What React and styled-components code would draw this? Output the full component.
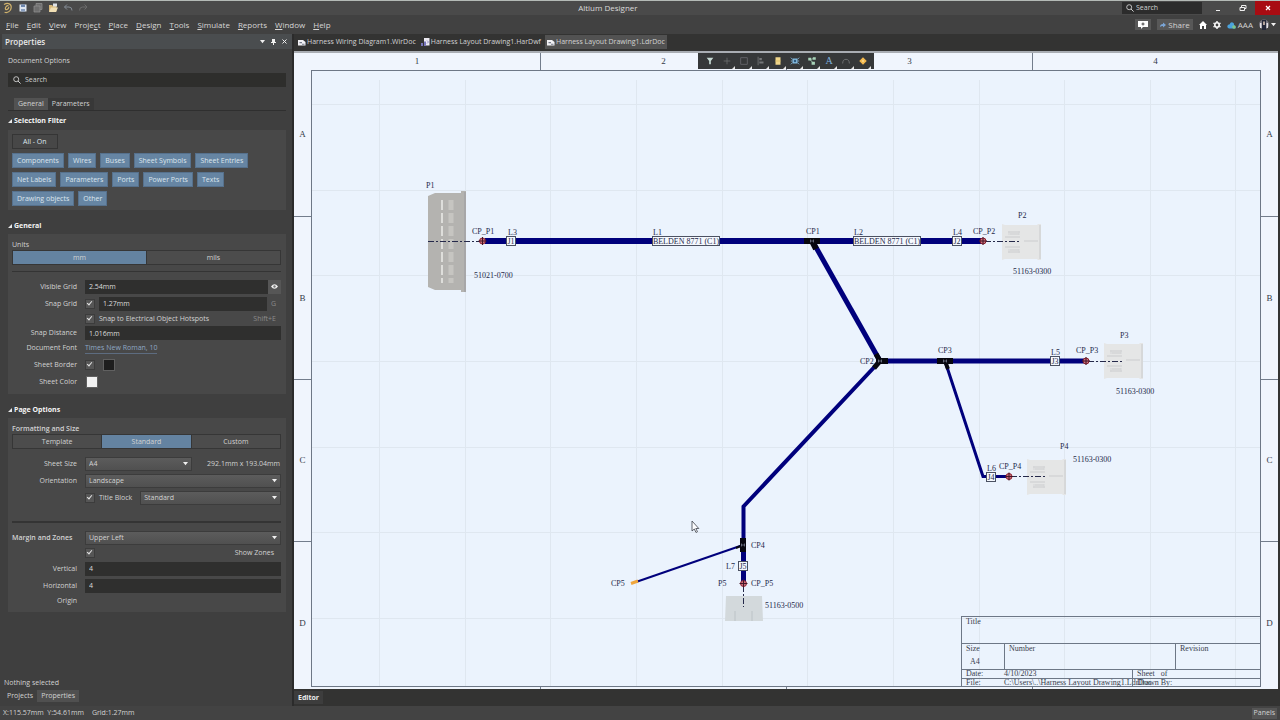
import React from "react";
import styled, { createGlobalStyle, css } from "styled-components";

const UI = '"Open Sans", "Noto Sans", sans-serif';
const SERIF = '"Liberation Serif", "Times New Roman", serif';

const GlobalStyle = createGlobalStyle`
  *, *::before, *::after { box-sizing: border-box; }
  html, body, #root { height: 100%; margin: 0; }
  body {
    background: #3a3a3a;
    color: #d2d2d2;
    font: 7px/10px ${UI};
    overflow: hidden;
  }
  button, input, select {
    margin: 0;
    padding: 0;
    border: 0;
    font: inherit;
    color: inherit;
    background: none;
  }
  svg { display: block; }
`;

/* ---------- shell ---------- */

const Shell = styled.div`
  display: flex;
  flex-direction: column;
  height: 100vh;
`;

const TitleBar = styled.header`
  display: grid;
  grid-template-columns: 9fr auto 10fr;
  height: 15px;
  align-items: center;
  background: #4a4a4a;
  border-top: 1px solid #b4bab6;
`;

const QuickAccess = styled.div`
  display: flex;
  gap: 3px;
  padding-left: 2px;
`;

const QuickButton = styled.button`
  display: grid;
  place-items: center;
  width: 12px;
  height: 14px;
`;

const AppTitle = styled.h1`
  margin: 0;
  font-size: 8px;
  line-height: 14px;
  font-weight: 400;
  color: #dadada;
`;

const WindowTools = styled.div`
  display: flex;
  justify-content: flex-end;
  align-items: center;
  height: 14px;
`;

const GlobalSearch = styled.label`
  display: flex;
  align-items: center;
  gap: 2px;
  width: 80px;
  height: 12px;
  padding-left: 4px;
  margin-right: 3px;
  background: #2c2c2c;
  input { flex: 1; min-width: 0; outline: none; }
  input::placeholder { color: #d0d0d0; opacity: 1; }
`;

const WindowButton = styled.button`
  display: grid;
  place-items: center;
  width: 25px;
  height: 14px;
  background: ${(p) => (p.$danger ? "#a80c12" : "transparent")};
`;

const MenuBar = styled.div`
  display: flex;
  justify-content: space-between;
  align-items: center;
  height: 19px;
  background: #414141;
`;

const Menus = styled.nav`
  display: flex;
  gap: 8px;
  padding-left: 6px;
`;

const MenuItem = styled.button`
  font-size: 8px;
  line-height: 14px;
  color: #d6d6d6;
`;

const Account = styled.div`
  display: flex;
  align-items: center;
  gap: 6px;
  padding-right: 4px;
  font-size: 8px;
`;

const AccountButton = styled.button`
  display: flex;
  align-items: center;
  justify-content: center;
  gap: 2px;
  height: 11px;
  padding: 0 ${(p) => (p.$filled ? "3px" : "0")};
  background: ${(p) => (p.$filled ? "#585858" : "transparent")};
`;

const Workspace = styled.div`
  display: grid;
  grid-template-columns: 294px minmax(0, 1fr);
  flex: 1;
  min-height: 0;
`;

/* ---------- properties panel ---------- */

const Panel = styled.aside`
  display: flex;
  flex-direction: column;
  min-height: 0;
  padding-left: 2px;
  background: #3f3f3f;
  border-right: 2px solid #2b2b2b;
  overflow: hidden;
`;

const PanelHeader = styled.div`
  display: flex;
  justify-content: space-between;
  align-items: center;
  height: 15px;
  flex: none;
  padding: 0 3px;
  background: #4a4d4f;
`;

const PanelTitle = styled.h2`
  margin: 0;
  font-size: 8px;
  line-height: 14px;
  font-weight: 600;
  color: #e8e8e8;
`;

const HeaderTools = styled.div`
  display: flex;
  gap: 2px;
`;

const HeaderButton = styled.button`
  display: grid;
  place-items: center;
  width: 9px;
  height: 12px;
`;

const PanelBody = styled.div`
  flex: 1;
  min-height: 0;
  padding: 6px 6px 0;
`;

const PanelCaption = styled.p`
  margin: 0 0 6px;
  line-height: 12px;
`;

const PanelSearch = styled.label`
  display: flex;
  align-items: center;
  gap: 4px;
  height: 14px;
  padding-left: 5px;
  background: #2e2e2c;
  input { flex: 1; min-width: 0; outline: none; }
  input::placeholder { color: #cfcfcf; opacity: 1; }
`;

const TabRow = styled.div`
  display: flex;
  height: 13px;
  margin-top: 11px;
  padding-left: 6px;
  border-bottom: 1px solid #2f2f2f;
`;

const PanelTab = styled.button`
  padding: 0 4px;
  line-height: 12px;
  background: ${(p) => (p.$active ? "#525252" : "#383838")};
`;

const SectionTitle = styled.h3`
  display: flex;
  align-items: center;
  gap: 2px;
  height: 12px;
  margin: ${(p) => (p.$first ? "4px 0 3px" : "10px 0 2px")};
  font-size: 7px;
  font-weight: 700;
  color: #f4f4f4;
`;

const SectionBox = styled.section`
  padding: 4px 5px 4px 4px;
  background: #484848;
`;

const Chips = styled.div`
  display: flex;
  flex-wrap: wrap;
  gap: 4px;
  margin-top: 4px;
`;

const Chip = styled.button`
  height: 15px;
  padding: 0 ${(p) => (p.$off ? "10px" : "4px")};
  line-height: 13px;
  color: #dde6ee;
  border: 1px solid ${(p) => (p.$off ? "#353535" : "#56718d")};
  background: ${(p) => (p.$off ? "#474747" : "#6685a3")};
`;

const GroupLabel = styled.div`
  height: 10px;
  margin-top: 2px;
  font-weight: ${(p) => (p.$strong ? 600 : 400)};
`;

const Segments = styled.div`
  display: flex;
  height: 15px;
  border: 1px solid #363636;
`;

const Segment = styled.button`
  flex: 1;
  line-height: 13px;
  background: ${(p) => (p.$active ? "#6483a1" : "#4c4c4c")};
  & + & { border-left: 1px solid #363636; }
`;

const Rule = styled.hr`
  width: 100%;
  height: ${(p) => (p.$thick ? "2px" : "1px")};
  margin: ${(p) => (p.$thick ? "15px 0 6px" : "6px 0")};
  border: 0;
  background: #343434;
`;

const rowHeights = { short: "14px", medium: "16px", tall: "17px" };

const Row = styled.div`
  display: grid;
  grid-template-columns: 65px minmax(0, 1fr);
  column-gap: 8px;
  align-items: center;
  height: ${(p) => rowHeights[p.$size || "tall"]};
`;

const RowLabel = styled.label`
  text-align: ${(p) => (p.$left ? "left" : "right")};
  font-weight: ${(p) => (p.$left ? 600 : 400)};
  white-space: nowrap;
`;

const RowControls = styled.div`
  display: flex;
  align-items: center;
  gap: ${(p) => (p.$joined ? "0" : "4px")};
  min-width: 0;
`;

const TextField = styled.input`
  flex: 1;
  min-width: 0;
  height: 14px;
  padding-left: 4px;
  background: #2f2f2e;
  color: #dcdcdc;
  outline: none;
`;

const Tick = styled.input`
  appearance: none;
  position: relative;
  flex: none;
  width: 10px;
  height: 10px;
  background: #565656;
  border: 1px solid #3c3c3c;
  &:checked::after {
    content: "";
    position: absolute;
    left: 2px;
    top: 0;
    width: 3px;
    height: 5px;
    border: solid #e4e4e4;
    border-width: 0 1px 1px 0;
    transform: rotate(40deg);
  }
`;

const Hint = styled.span`
  margin-left: auto;
  padding-right: 5px;
  color: #8b8b8b;
`;

const IconButton = styled.button`
  display: grid;
  place-items: center;
  width: 13px;
  height: 14px;
  background: #565656;
`;

const FontLink = styled.a`
  color: #8ea7c4;
  text-decoration: none;
  border-bottom: 1px solid #5d6c80;
`;

const Swatch = styled.button`
  width: 12px;
  height: 12px;
  margin-left: ${(p) => (p.$spaced ? "4px" : "1px")};
  border: 1px solid #606060;
  background: ${(p) => p.$color};
`;

const SelectWrap = styled.div`
  position: relative;
  flex: ${(p) => (p.$compact ? "0 0 107px" : "1")};
  min-width: 0;
  height: 14px;
  margin-left: ${(p) => (p.$spaced ? "4px" : "0")};
  background: linear-gradient(#5c5c5c, #505050);
  border: 1px solid #3c3c3c;
  select {
    appearance: none;
    display: block;
    width: 100%;
    height: 12px;
    padding-left: 3px;
    outline: none;
  }
  svg {
    position: absolute;
    right: 3px;
    top: 4px;
    pointer-events: none;
  }
`;

const PageRowsWrap = styled.div`
  padding-top: 6px;
`;

const Trailing = styled.label`
  margin-left: auto;
  padding-right: ${(p) => (p.$inset ? "7px" : "1px")};
  white-space: nowrap;
`;

const PanelStatus = styled.div`
  height: 12px;
  flex: none;
  padding-left: 2px;
  line-height: 12px;
`;

const DockTabs = styled.div`
  display: flex;
  align-items: center;
  height: 17px;
  flex: none;
  padding: 0 0 4px 1px;
`;

const DockTab = styled.button`
  height: 12px;
  padding: 0 4px;
  background: ${(p) => (p.$active ? "#505050" : "transparent")};
`;

/* ---------- document area ---------- */

const Documents = styled.main`
  display: flex;
  flex-direction: column;
  min-width: 0;
  min-height: 0;
  background: #333332;
`;

const DocTabs = styled.div`
  display: flex;
  height: 17px;
  flex: none;
  align-items: flex-end;
  padding: 0 0 2px 2px;
`;

const DocTab = styled.button`
  display: flex;
  align-items: center;
  gap: 1px;
  height: 14px;
  padding: 0 2px 0 1px;
  margin-right: 2px;
  background: ${(p) => (p.$active ? "#525252" : "transparent")};
`;

const Viewport = styled.div`
  position: relative;
  flex: 1;
  min-height: 0;
  margin-right: 2px;
  border-top: 2px solid #a9adb3;
  overflow: hidden;
`;

const Sheet = styled.div`
  display: grid;
  grid-template: 17px minmax(0, 1fr) 17px / 17px minmax(0, 1fr) 17px;
  height: calc(100% + 15px);
  background: #f0f5fd;
  color: #333a48;
  font: 9px/16px ${SERIF};
`;

const zoneBase = css`
  display: grid;
  justify-items: stretch;
  align-items: center;
  text-align: center;
`;

const HorizontalZones = styled.div`
  ${zoneBase}
  grid-area: ${(p) => (p.$bottom ? 3 : 1)} / 1 / auto / 4;
  grid-template-columns: repeat(4, 1fr);
  span + span { border-left: 1px solid #737d8c; }
  span { height: 17px; }
`;

const VerticalZones = styled.div`
  ${zoneBase}
  grid-area: 1 / ${(p) => (p.$right ? 3 : 1)} / 4 / auto;
  grid-template-rows: repeat(4, 1fr);
  align-items: stretch;
  span { display: grid; place-items: center; }
  span + span { border-top: 1px solid #737d8c; }
`;

const Frame = styled.div`
  position: relative;
  grid-area: 2 / 2;
  background: #ebf3fd;
  outline: 1px solid #6d7786;
  outline-offset: -1px;
`;

const Drawing = styled.svg`
  width: 100%;
  height: 100%;
  font: 8px ${SERIF};
`;

const ActiveBar = styled.div`
  position: absolute;
  inset: 0 0 auto 0;
  display: flex;
  justify-content: center;
  pointer-events: none;
`;

const ActiveTools = styled.div`
  display: flex;
  padding: 0 3px;
  background: #363839;
  pointer-events: auto;
`;

const ToolButton = styled.button`
  position: relative;
  display: grid;
  place-items: center;
  width: 17px;
  height: 16px;
  &::after {
    content: "";
    display: ${(p) => (p.$menu ? "block" : "none")};
    position: absolute;
    right: 0;
    bottom: 0;
    width: 3px;
    height: 3px;
    background: #e4e4e4;
    clip-path: polygon(100% 0, 100% 100%, 0 100%);
  }
`;

const TitleBlock = styled.div`
  position: absolute;
  right: 0;
  bottom: 0;
  display: grid;
  grid-template: 26px 26px 9px 8px / minmax(0, 1fr);
  width: 300px;
  font: 8px/9px ${SERIF};
  color: #3a414e;
  border: 1px solid #6d7786;
`;

const BlockRow = styled.div`
  display: grid;
  grid-template-columns: ${(p) => p.$columns};
  min-height: 0;
  & + & { border-top: 1px solid #6d7786; }
`;

const BlockCell = styled.div`
  padding-left: ${(p) => (p.$flush ? "0" : "4px")};
  white-space: pre;
  border-left: ${(p) => (p.$ruled ? "1px solid #6d7786" : "0")};
  line-height: ${(p) => (p.$tight ? "8px" : "9px")};
`;

const SizeValue = styled.div`
  padding: 4px 0 0 4px;
`;

const EditorTabs = styled.div`
  display: flex;
  align-items: center;
  height: 17px;
  flex: none;
`;

const EditorTab = styled.button`
  height: 13px;
  padding: 0 4px;
  font-weight: 700;
  color: #ececec;
  background: #3d3d3d;
`;

const StatusBar = styled.footer`
  display: flex;
  align-items: center;
  gap: 8px;
  height: 14px;
  padding: 0 3px;
  background: #434343;
  white-space: pre;
`;

const PanelsButton = styled.button`
  height: 11px;
  margin-left: auto;
  padding: 0 2px;
  background: #555555;
`;

/* ---------- small icons ---------- */

const Caret = ({ color = "#f0f0f0" }) => (
  <svg width="5" height="4" viewBox="0 0 5 4">
    <path d="M0 0h5L2.5 3.2z" fill={color} />
  </svg>
);

const SectionMark = () => (
  <svg width="4" height="4" viewBox="0 0 4 4">
    <path d="M4 0v4H0z" fill="#e8e8e8" />
  </svg>
);

const Magnifier = () => (
  <svg width="8" height="8" viewBox="0 0 8 8" fill="none" stroke="#cfcfcf">
    <circle cx="3.2" cy="3.2" r="2.5" strokeWidth="0.9" />
    <path d="M5 5l2.6 2.6" strokeWidth="1" />
  </svg>
);

const quickIcons = [
  ["Altium", <g key="a" fill="none" stroke="#d0b26c" strokeWidth="1.2"><path d="M2 2.5C6 .2 9.6 2 9.2 5.6 9 9 5.5 11.4 2.6 10.2" /><path d="M6.5 3.4C4 3.6 2.8 6 3.6 7.4c1.6.8 3.4-.8 3.2-2.6" /></g>],
  ["Save", <g key="b"><path d="M2.500 2.500h7v7h-7z" fill="#dfe6f0" /><path d="M4 2.500h4v2.500H4z" fill="#6d86ad" /><path d="M4 7h4v2.500H4z" fill="#8ba0c0" /></g>],
  ["Save all", <g key="c" fill="#6e6e6e" stroke="#929292" strokeWidth=".7"><path d="M4 1.500h6v6H4z" /><path d="M2 4h6v6H2z" /></g>],
  ["Open", <g key="d"><path d="M2 3h3l1 1h3.500v5.500H2z" fill="#d8b878" /><path d="M4 5.500h7L9 10H2z" fill="#f1dfb4" /><path d="M6 1.500h4v3H6z" fill="#dfe3e8" /></g>],
  ["Undo", <path key="e" d="M5 2.500L2.500 5 5 7.500M2.500 5h4.500q3 0 3 3.500" fill="none" stroke="#858d96" />],
  ["Redo", <path key="f" d="M7.500 2.500L10 5 7.500 7.500M10 5H5.500Q2.500 5 2.500 8.500" fill="none" stroke="#6b6b6b" />],
];

const DocIcon = ({ kind }) => (
  <svg width="9" height="9" viewBox="0 0 9 9">
    {kind === "har" ? (
      <g>
        <path d="M3 0h5.500v7.500H3z" fill="#eceaf2" />
        <path d="M0 5h2v3H0zM3 3.500h2V8H3z" fill="#7774b8" />
        <path d="M6 2.500l1.500 1.500L6 5.500" fill="none" stroke="#7774b8" strokeWidth=".8" />
      </g>
    ) : (
      <g>
        <path d="M1 2h5l2.500 2v3.500H1z" fill="#f1f1f4" />
        <path d="M2.500 4h2.500v1.200H2.500zM5 5.700h2.500v1H5z" fill="#777c8c" />
      </g>
    )}
  </svg>
);

const toolIcons = [
  ["Filter", <path key="0" d="M2 2h8L7 6v4H5V6z" fill="#c5d8d2" />],
  ["Move", <path key="1" d="M6 2v8M2 6h8" stroke="#6b6d6e" fill="none" />],
  ["Select", <path key="2" d="M2 2h8v8H2z" stroke="#68686e" fill="none" />],
  ["Align", <g key="3" fill="#747678"><path d="M2 1h1v10H2zM4 2.500h3v2.500H4zM4 6.500h5v2.500H4z" /></g>],
  ["Place connector", <g key="4"><path d="M3 1.500h6v9H3z" fill="#f0d68a" /><path d="M3 5.500h6v1H3z" fill="#d9b962" /></g>],
  ["Place splice", <g key="5"><path d="M3 3h6v6H3z" fill="#82b9de" /><path d="M1 2l2 2M1 6h2M1 10l2-2M11 2L9 4M11 6H9M11 10L9 8" stroke="#82b9de" /><circle cx="6" cy="6" r="1.500" fill="#315c80" /></g>],
  ["Place harness", <g key="6" fill="#a8d3b9"><path d="M1.500 2h3.500v3.500H1.500zM7 1.500h3.500v3H7zM5.500 7h4v3.500h-4z" /><path d="M4 4.500l3 3.500M5 4l3-1" stroke="#a8d3b9" /></g>],
  ["Place text", <text key="7" x="6" y="10" textAnchor="middle" fontFamily={SERIF} fontSize="12" fill="#7fb0dd">A</text>],
  ["Place arc", <path key="8" d="M2 9a4 5 0 0 1 8 0" stroke="#77797b" fill="none" />],
  ["Place note", <g key="9"><path d="M6 1.500L10.500 6 6 10.500 1.500 6z" fill="#f3b94e" /><path d="M6 4.500L7.500 6 6 7.500 4.500 6z" fill="#fbdc93" /></g>],
];

/* ---------- harness drawing ---------- */

const INK = "#25294a";
const WIRE = "#00007c";

const gridX = [379, 465, 550, 636, 722, 807, 893, 979, 1064, 1150, 1235];
const gridY = [104, 190, 275, 361, 447, 532, 618];

const notes = [
  ["P1", 426, 188], ["CP_P1", 472, 234], ["L3", 508, 235], ["51021-0700", 474, 278],
  ["L1", 653, 235], ["CP1", 806, 234], ["L2", 854, 235], ["L4", 953, 235],
  ["CP_P2", 973, 234], ["P2", 1018, 218], ["51163-0300", 1013, 274],
  ["CP2", 860, 364], ["CP3", 938, 353], ["L5", 1051, 355], ["CP_P3", 1076, 353],
  ["P3", 1120, 338], ["51163-0300", 1116, 394], ["P4", 1060, 449],
  ["L6", 987, 471], ["CP_P4", 999, 469], ["51163-0300", 1073, 462],
  ["CP4", 751, 548], ["L7", 726, 569], ["CP5", 611, 586], ["P5", 718, 586],
  ["CP_P5", 751, 586], ["51163-0500", 765, 608],
];

const tags = [
  ["BELDEN 8771 (C1)", 653, 237, 66], ["BELDEN 8771 (C1)", 854, 237, 66],
  ["J1", 507, 237, 8], ["J2", 953, 237, 8], ["J3", 1051, 357, 8], ["J4", 987, 473, 8], ["J5", 739, 562, 8],
];

const Tag = ({ text, x, y, width }) => (
  <g>
    <rect x={x - 0.5} y={y - 0.5} width={width + 1} height="9" fill="#f4f8fe" stroke="#4b5162" />
    <text x={x + width / 2} y={y + 7} textAnchor="middle" fill={INK}>{text}</text>
  </g>
);

const Pin = ({ x, y }) => (
  <g>
    <circle cx={x} cy={y} r="3" fill="#c9717c" stroke="#8d1f2c" />
    <path d={`M${x - 4} ${y}h8M${x} ${y - 4}v8`} stroke="#431526" strokeWidth="1" />
  </g>
);

const Plug = ({ x, y }) => (
  <g transform={`translate(${x} ${y})`}>
    <path d="M0 0l3 1h32l1-1h3v36h-3l-1-1H3l-3 1z" fill="#e5e6e6" />
    <path d="M38 1v34" stroke="#c8cacc" />
    <path d="M6 8h12M8 10h9M3 13h15M3 23h15M8 26h9M6 28h12M22 17h14" stroke="#cbccce" fill="none" />
    <path d="M7 7v4M17 7v4M7 25v4M17 25v4" stroke="#d4d5d7" />
  </g>
);

const Splice = ({ x, y, width = 16, height = 6, shift = 0 }) => (
  <g>
    <rect x={x - width / 2 + shift} y={y - height / 2} width={width} height={height} fill="#07070f" />
    <path d={`M${x - 1.5} ${y - 1.5}v3M${x + 1.5} ${y - 1.5}v3M${x - 2} ${y}h4`} stroke="#8d93a8" strokeWidth=".6" />
  </g>
);

const HarnessDrawing = () => (
  <Drawing viewBox="311 70 950 617" preserveAspectRatio="xMinYMin meet" role="img" aria-label="Harness layout">
    <g stroke="#dfe7f0">
      {gridX.map((x) => <path key={x} d={`M${x + 0.5} 80V686`} />)}
      {gridY.map((y) => <path key={y} d={`M312 ${y + 0.5}H1260`} />)}
    </g>

    <path d="M428 196l7-3h26v-2h5v101h-5v-2h-26l-7-3z" fill="#b4b3b0" />
    <path d="M465 192v100" stroke="#9b9ba0" />
    <path d="M442 200v83" stroke="#dededb" strokeWidth="2" strokeDasharray="10 3" />
    <path d="M451 200v83" stroke="#c6c5c1" strokeWidth="5" strokeDasharray="10 3" />

    <Plug x={1002} y={224} />
    <Plug x={1104} y={343} />
    <Plug x={1027} y={459} />
    <path d="M726 596h36l1 25h-38z" fill="#d3d9dc" />
    <path d="M735 611v10M752 611v10" stroke="#bcc3c7" />

    <g fill="none" stroke={WIRE}>
      <path d="M485 241H982" strokeWidth="6" />
      <path d="M813 242L880 361" strokeWidth="5" />
      <path d="M880 361H1084" strokeWidth="5" />
      <path d="M880 361L743.500 506.500V546" strokeWidth="4" />
      <path d="M743.500 546V582" strokeWidth="5" />
      <path d="M945 361L983 476.500H1006" strokeWidth="3" />
      <path d="M743 545L636 582" strokeWidth="2" />
    </g>
    <g fill="none" stroke="#07070f">
      <path d="M812 241l4 8" strokeWidth="6" />
      <path d="M876 354l4 7-6 7" strokeWidth="5" />
      <path d="M945 361l3 8" strokeWidth="4" />
      <path d="M743 545l-7 3" strokeWidth="2" />
    </g>
    <path d="M638 581l-7 2.500" stroke="#f0a63c" strokeWidth="3" />

    <Splice x={812} y={241} />
    <Splice x={880} y={361} width={12} shift={2} />
    <Splice x={945} y={361} />
    <Splice x={743} y={545} width={6} height={14} />

    <g fill="none" stroke={INK} strokeDasharray="6 2 2 2">
      <path d="M428 241.500H480" />
      <path d="M985 241.500H1021" />
      <path d="M1088 361.500H1124" />
      <path d="M1011 476.500H1047" />
      <path d="M743.500 586V607" />
    </g>

    <Pin x={482.5} y={241} />
    <Pin x={983} y={241} />
    <Pin x={1086} y={361} />
    <Pin x={1009} y={476.5} />
    <Pin x={743.5} y={583.5} />

    {tags.map(([text, x, y, width]) => <Tag key={text + x} text={text} x={x} y={y} width={width} />)}
    <g fill={INK}>
      {notes.map(([text, x, y]) => <text key={text + x} x={x} y={y}>{text}</text>)}
    </g>

    <path d="M692 521v10l2.300-2 1.700 3.500 1.500-.8-1.700-3.200h3z" fill="#fdfdff" stroke="#3b3f49" strokeWidth=".8" />
  </Drawing>
);

/* ---------- composed controls ---------- */

const SelectField = ({ id, label, value, compact, spaced }) => (
  <SelectWrap $compact={compact} $spaced={spaced}>
    <select id={id} aria-label={label} defaultValue={value}>
      <option>{value}</option>
    </select>
    <Caret />
  </SelectWrap>
);

const SegmentGroup = ({ label, items, active }) => (
  <Segments role="group" aria-label={label}>
    {items.map((item) => (
      <Segment key={item} type="button" aria-pressed={item === active} $active={item === active}>{item}</Segment>
    ))}
  </Segments>
);

const menus = [
  ["", "F", "ile"], ["", "E", "dit"], ["", "V", "iew"], ["Proje", "c", "t"], ["", "P", "lace"], ["", "D", "esign"],
  ["", "T", "ools"], ["", "S", "imulate"], ["", "R", "eports"], ["", "W", "indow"], ["", "H", "elp"],
];

const filters = [
  "Components", "Wires", "Buses", "Sheet Symbols", "Sheet Entries", "Net Labels",
  "Parameters", "Ports", "Power Ports", "Texts", "Drawing objects", "Other",
];

const zoneColumns = ["1", "2", "3", "4"];
const zoneRows = ["A", "B", "C", "D"];

const TopBars = () => (
  <>
    <TitleBar>
      <QuickAccess>
        {quickIcons.map(([label, drawing]) => (
          <QuickButton key={label} type="button" aria-label={label}>
            <svg width="12" height="12" viewBox="0 0 12 12">{drawing}</svg>
          </QuickButton>
        ))}
      </QuickAccess>
      <AppTitle>Altium Designer</AppTitle>
      <WindowTools>
        <GlobalSearch>
          <Magnifier />
          <input aria-label="Search everything" placeholder="Search" />
        </GlobalSearch>
        <WindowButton type="button" aria-label="Minimize">
          <svg width="8" height="8" viewBox="0 0 8 8"><path d="M2 6.500h4" stroke="#eee" /></svg>
        </WindowButton>
        <WindowButton type="button" aria-label="Restore">
          <svg width="8" height="8" viewBox="0 0 8 8" fill="none" stroke="#eee"><path d="M1 3.500h4.500v3H1zM2.500 3.500v-2H7v3H5.500" /></svg>
        </WindowButton>
        <WindowButton type="button" aria-label="Close" $danger>
          <svg width="6" height="6" viewBox="0 0 6 6"><path d="M1 1l4 4M5 1L1 5" stroke="#fff" strokeWidth="1.200" /></svg>
        </WindowButton>
      </WindowTools>
    </TitleBar>
    <MenuBar>
      <Menus>
        {menus.map(([before, key, after]) => (
          <MenuItem key={key + after} type="button">{before}<u>{key}</u>{after}</MenuItem>
        ))}
      </Menus>
      <Account>
        <AccountButton type="button" aria-label="Notifications" $filled>
          <svg width="10" height="8" viewBox="0 0 10 8"><path d="M0 0h10v6H5L3 8V6H0z" fill="#fff" /><path d="M5 1.500v3M3.500 3h3" stroke="#444" /></svg>
        </AccountButton>
        <AccountButton type="button" $filled>
          <svg width="6" height="6" viewBox="0 0 6 6"><path d="M0 5q0-3 3-3V.5L6 3 3 5.500V4Q1 4 0 5z" fill="#7aa5d6" /></svg>
          Share
        </AccountButton>
        <AccountButton type="button" aria-label="Home">
          <svg width="8" height="8" viewBox="0 0 8 8"><path d="M4 0l4 4H7v4H5V5H3v3H1V4H0z" fill="#fff" /></svg>
        </AccountButton>
        <AccountButton type="button" aria-label="Settings">
          <svg width="8" height="8" viewBox="0 0 8 8" fill="none" stroke="#fff"><circle cx="4" cy="4" r="2.200" strokeWidth="1.600" /><path d="M4 0v1M4 7v1M.5 2l1 .6M6.500 5.400l1 .6M.5 6l1-.6M6.500 2.600l1-.6" strokeWidth="1.400" /></svg>
        </AccountButton>
        <AccountButton type="button">
          <svg width="9" height="8" viewBox="0 0 9 8"><path d="M2 7.500Q0 7 .4 5T2.500 3.500Q4-.2 6.500 2q.8 1 .5 2.200Q9 4.500 8.500 7.500z" fill="#4ba3dd" /><circle cx="7" cy="6" r="1.800" fill="#7cc68c" /></svg>
          AAA
        </AccountButton>
        <AccountButton type="button" aria-label="Profile">
          <svg width="10" height="11" viewBox="0 0 10 11"><circle cx="5" cy="5.500" r="5" fill="#77747f" /><path d="M3 1h4v10H3z" fill="#25283a" /><path d="M4.200 2.500h1.600V6H4.200z" fill="#d9c2b6" /><path d="M1 4h1.500v5H1zM7.500 4H9v5H7.500z" fill="#e3dfe6" /></svg>
          <Caret />
        </AccountButton>
      </Account>
    </MenuBar>
  </>
);

const PageRows = () => (
  <PageRowsWrap>
    <Row>
      <RowLabel htmlFor="sheet-size">Sheet Size</RowLabel>
      <RowControls>
        <SelectField id="sheet-size" value="A4" compact />
        <Trailing as="span">292.1mm x 193.04mm</Trailing>
      </RowControls>
    </Row>
    <Row>
      <RowLabel htmlFor="orientation">Orientation</RowLabel>
      <RowControls><SelectField id="orientation" value="Landscape" /></RowControls>
    </Row>
    <Row>
      <span />
      <RowControls>
        <Tick id="title-block" type="checkbox" defaultChecked />
        <label htmlFor="title-block">Title Block</label>
        <SelectField id="block-style" label="Title block style" value="Standard" spaced />
      </RowControls>
    </Row>
    <Rule $thick />
    <Row>
      <RowLabel $left htmlFor="zones-origin">Margin and Zones</RowLabel>
      <RowControls><SelectField id="zones-origin" value="Upper Left" /></RowControls>
    </Row>
    <Row $size="short">
      <span />
      <RowControls>
        <Tick id="show-zones" type="checkbox" defaultChecked />
        <Trailing $inset htmlFor="show-zones">Show Zones</Trailing>
      </RowControls>
    </Row>
    <Row>
      <RowLabel htmlFor="vertical">Vertical</RowLabel>
      <RowControls><TextField id="vertical" defaultValue="4" /></RowControls>
    </Row>
    <Row>
      <RowLabel htmlFor="horizontal">Horizontal</RowLabel>
      <RowControls><TextField id="horizontal" defaultValue="4" /></RowControls>
    </Row>
    <Row $size="short">
      <RowLabel as="span">Origin</RowLabel>
    </Row>
  </PageRowsWrap>
);

const PropertiesPanel = () => (
  <Panel>
    <PanelHeader>
      <PanelTitle>Properties</PanelTitle>
      <HeaderTools>
        <HeaderButton type="button" aria-label="Panel menu"><Caret /></HeaderButton>
        <HeaderButton type="button" aria-label="Pin panel">
          <svg width="5" height="6" viewBox="0 0 5 6"><path d="M1 0h3v3h1v1H0V3h1zM2 4h1v2H2z" fill="#f0f0f0" /></svg>
        </HeaderButton>
        <HeaderButton type="button" aria-label="Close panel">
          <svg width="5" height="5" viewBox="0 0 5 5"><path d="M.5.5l4 4M4.500.5l-4 4" stroke="#f0f0f0" /></svg>
        </HeaderButton>
      </HeaderTools>
    </PanelHeader>
    <PanelBody>
      <PanelCaption>Document Options</PanelCaption>
      <PanelSearch>
        <Magnifier />
        <input aria-label="Search properties" placeholder="Search" />
      </PanelSearch>
      <TabRow>
        <PanelTab type="button" $active>General</PanelTab>
        <PanelTab type="button">Parameters</PanelTab>
      </TabRow>

      <SectionTitle $first><SectionMark />Selection Filter</SectionTitle>
      <SectionBox>
        <Chip type="button" $off>All - On</Chip>
        <Chips>
          {filters.map((name) => <Chip key={name} type="button">{name}</Chip>)}
        </Chips>
      </SectionBox>

      <SectionTitle><SectionMark />General</SectionTitle>
      <SectionBox>
        <GroupLabel>Units</GroupLabel>
        <SegmentGroup label="Units" items={["mm", "mils"]} active="mm" />
        <Rule />
        <Row>
          <RowLabel htmlFor="visible">Visible Grid</RowLabel>
          <RowControls $joined>
            <TextField id="visible" defaultValue="2.54mm" />
            <IconButton type="button" aria-label="Toggle grid">
              <svg width="7" height="7" viewBox="0 0 7 7"><path d="M0 3.500Q3.500-1 7 3.500 3.500 8 0 3.500z" fill="#f2f2f2" /><circle cx="3.500" cy="3.500" r="1.200" fill="#777" /></svg>
            </IconButton>
          </RowControls>
        </Row>
        <Row>
          <RowLabel htmlFor="snap">Snap Grid</RowLabel>
          <RowControls>
            <Tick type="checkbox" defaultChecked aria-label="Snap Grid enabled" />
            <TextField id="snap" defaultValue="1.27mm" />
            <Hint>G</Hint>
          </RowControls>
        </Row>
        <Row $size="short">
          <span />
          <RowControls>
            <Tick id="hotspots" type="checkbox" defaultChecked />
            <label htmlFor="hotspots">Snap to Electrical Object Hotspots</label>
            <Hint>Shift+E</Hint>
          </RowControls>
        </Row>
        <Row $size="short">
          <RowLabel htmlFor="distance">Snap Distance</RowLabel>
          <RowControls><TextField id="distance" defaultValue="1.016mm" /></RowControls>
        </Row>
        <Row $size="medium">
          <RowLabel as="span">Document Font</RowLabel>
          <RowControls><FontLink href="#font">Times New Roman, 10</FontLink></RowControls>
        </Row>
        <Row>
          <RowLabel htmlFor="border">Sheet Border</RowLabel>
          <RowControls>
            <Tick id="border" type="checkbox" defaultChecked />
            <Swatch type="button" aria-label="Border color" $color="#1e1e1e" $spaced />
          </RowControls>
        </Row>
        <Row>
          <RowLabel as="span">Sheet Color</RowLabel>
          <RowControls><Swatch type="button" aria-label="Sheet color" $color="#f2f2f2" /></RowControls>
        </Row>
      </SectionBox>

      <SectionTitle><SectionMark />Page Options</SectionTitle>
      <SectionBox>
        <GroupLabel $strong>Formatting and Size</GroupLabel>
        <SegmentGroup label="Formatting" items={["Template", "Standard", "Custom"]} active="Standard" />
        <PageRows />
      </SectionBox>
    </PanelBody>
    <PanelStatus>Nothing selected</PanelStatus>
    <DockTabs>
      <DockTab type="button">Projects</DockTab>
      <DockTab type="button" $active>Properties</DockTab>
    </DockTabs>
  </Panel>
);

const DocumentArea = () => (
  <Documents>
    <DocTabs>
      <DocTab type="button"><DocIcon />Harness Wiring Diagram1.WirDoc</DocTab>
      <DocTab type="button"><DocIcon kind="har" />Harness Layout Drawing1.HarDwf</DocTab>
      <DocTab type="button" $active><DocIcon />Harness Layout Drawing1.LdrDoc</DocTab>
    </DocTabs>
    <Viewport>
      <Sheet>
        <HorizontalZones>{zoneColumns.map((z) => <span key={z}>{z}</span>)}</HorizontalZones>
        <VerticalZones>{zoneRows.map((z) => <span key={z}>{z}</span>)}</VerticalZones>
        <VerticalZones $right>{zoneRows.map((z) => <span key={z}>{z}</span>)}</VerticalZones>
        <HorizontalZones $bottom>{zoneColumns.map((z) => <span key={z} />)}</HorizontalZones>
        <Frame>
          <HarnessDrawing />
          <TitleBlock>
            <BlockRow $columns="minmax(0, 1fr)"><BlockCell>Title</BlockCell></BlockRow>
            <BlockRow $columns="42px minmax(0, 1fr) 85px">
              <BlockCell>Size<SizeValue>A4</SizeValue></BlockCell>
              <BlockCell $ruled>Number</BlockCell>
              <BlockCell $ruled>Revision</BlockCell>
            </BlockRow>
            <BlockRow $columns="42px minmax(0, 1fr) 128px">
              <BlockCell $tight>Date:</BlockCell>
              <BlockCell $tight $flush>4/10/2023</BlockCell>
              <BlockCell $tight $ruled>{"Sheet   of"}</BlockCell>
            </BlockRow>
            <BlockRow $columns="42px minmax(0, 1fr) 128px">
              <BlockCell $tight>File:</BlockCell>
              <BlockCell $tight $flush>{"C:\\Users\\..\\Harness Layout Drawing1.LdrDoc"}</BlockCell>
              <BlockCell $tight $ruled>Drawn By:</BlockCell>
            </BlockRow>
          </TitleBlock>
        </Frame>
      </Sheet>
      <ActiveBar>
        <ActiveTools role="toolbar" aria-label="Active bar">
          {toolIcons.map(([label, drawing], i) => (
            <ToolButton key={label} type="button" aria-label={label} $menu={i > 0}>
              <svg width="10" height="10" viewBox="0 0 12 12">{drawing}</svg>
            </ToolButton>
          ))}
        </ActiveTools>
      </ActiveBar>
    </Viewport>
    <EditorTabs><EditorTab type="button">Editor</EditorTab></EditorTabs>
  </Documents>
);

export default function App() {
  return (
    <Shell>
      <GlobalStyle />
      <TopBars />
      <Workspace>
        <PropertiesPanel />
        <DocumentArea />
      </Workspace>
      <StatusBar>
        <span>X:115.57mm  Y:54.61mm</span>
        <span>Grid:1.27mm</span>
        <PanelsButton type="button">Panels</PanelsButton>
      </StatusBar>
    </Shell>
  );
}
